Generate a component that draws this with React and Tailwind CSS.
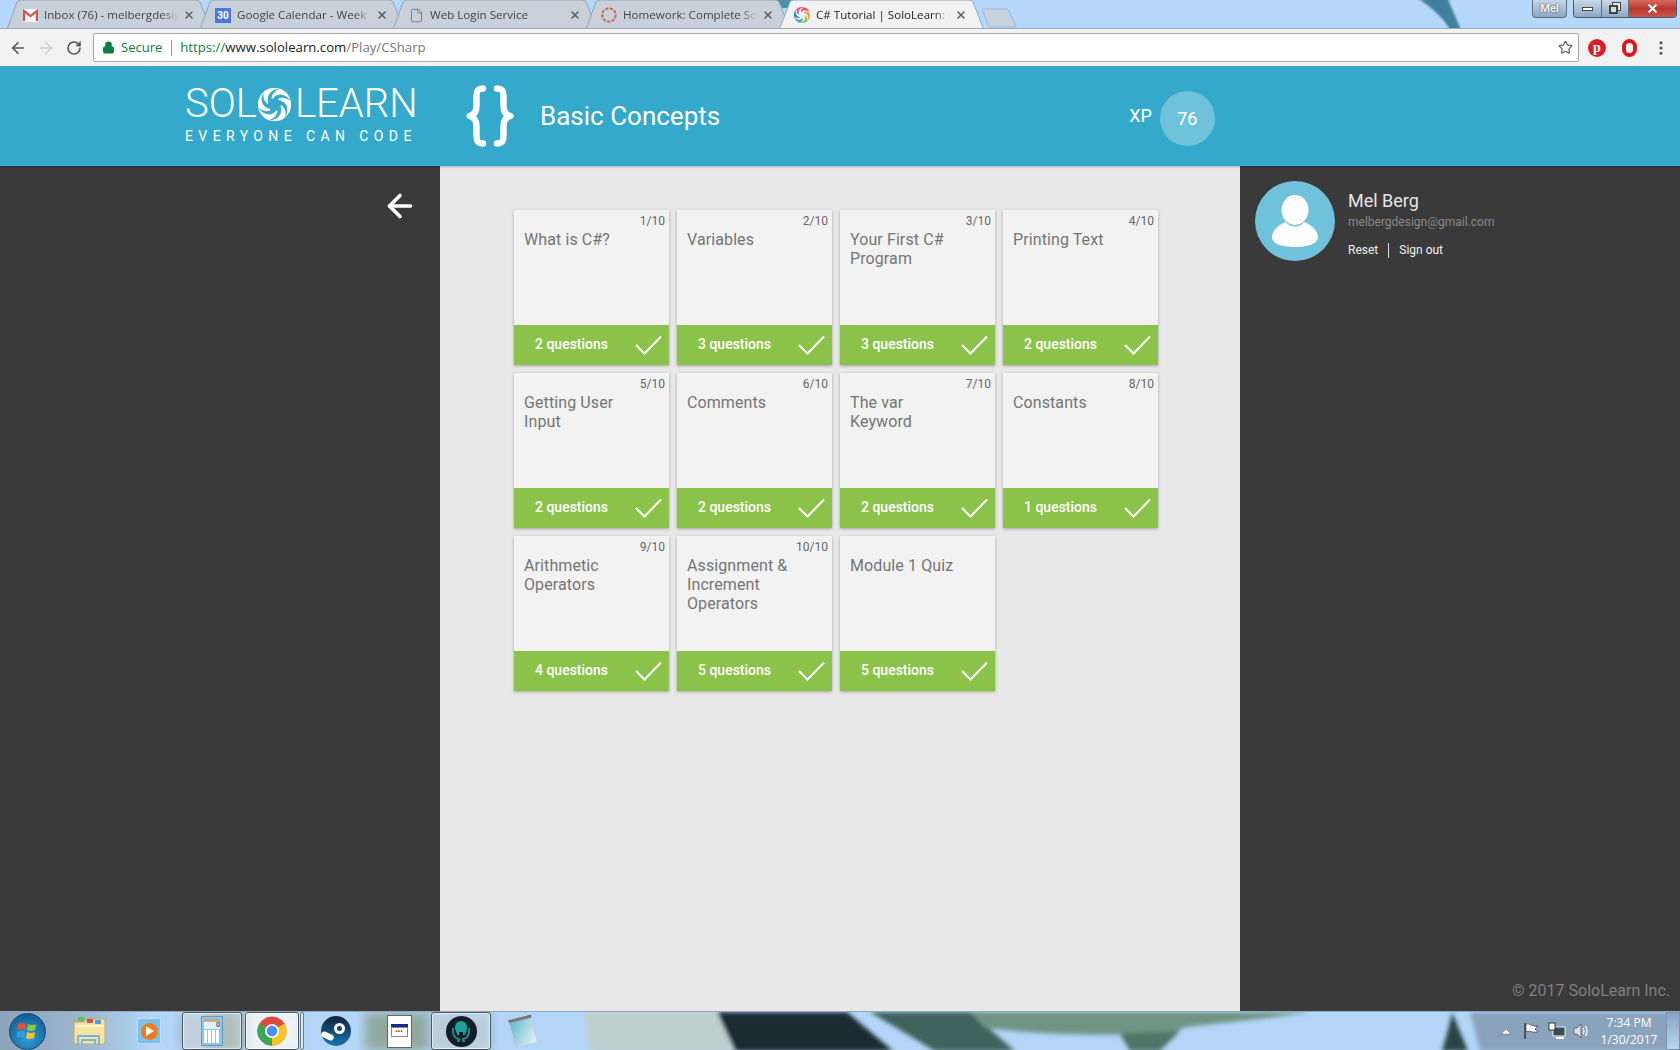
import React from "react";
import { ArrowLeft, ArrowRight, RotateCw, Star, Lock, X, File, EllipsisVertical } from "lucide-react";

const Swirl = ({ size = 32, colors = ["#fff", "#fff", "#fff", "#fff", "#fff", "#fff"], cut = "#35a9cc" }) => (
  <svg width={size} height={size} viewBox="0 0 32 32" className="shrink-0">
    {colors.map((c, i) => (
      <path key={"s" + i} d="M16 16 L16 0 A16 16 0 0 1 29.86 8 Z" fill={c} stroke={c} strokeWidth="0.3" transform={`rotate(${i * 60} 16 16)`} />
    ))}
    {colors.map((c, i) => (
      <path key={"c" + i} d="M15 9.5 C20 4.5 27 5.5 32 13 C27 9 22 8.5 18.5 11.5 Z" fill={cut} transform={`rotate(${i * 60} 16 16)`} />
    ))}
    <circle cx="16" cy="16" r="6.4" fill={cut} />
  </svg>
);

const tabs = [
  { t: "Inbox (76) - melbergdesign", icon: "m" },
  { t: "Google Calendar - Week", icon: "c" },
  { t: "Web Login Service", icon: "d" },
  { t: "Homework: Complete Solution", icon: "r" },
  { t: "C# Tutorial | SoloLearn: Learn", icon: "s", active: true },
];

const Fav = ({ k }) => {
  if (k === "m")
    return (
      <svg width="15" height="13" viewBox="0 0 15 13">
        <rect width="15" height="13" fill="#f4f4f4" />
        <path d="M1 12V2l6.5 5L14 2v10" fill="none" stroke="#d8504a" strokeWidth="2.2" />
      </svg>
    );
  if (k === "c")
    return <div className="w-[16px] h-[15px] bg-[#4a78e0] text-white text-[10px] font-bold leading-[15px] text-center">30</div>;
  if (k === "d") return <File size={15} strokeWidth={1.2} color="#666" />;
  if (k === "r")
    return (
      <svg width="16" height="16" viewBox="0 0 16 16">
        <circle cx="8" cy="8" r="6.7" fill="none" stroke="#e2504c" strokeWidth="1.8" strokeDasharray="3.2 1.4" />
      </svg>
    );
  return <Swirl size={16} cut="#f2f2f2" colors={["#e8574a", "#f0a13c", "#8bc34a", "#36aacd", "#3f7fd0", "#d85a9a"]} />;
};

const Tab = ({ t, icon, active }) => (
  <div className={`relative w-[193px] h-[30px] shrink-0 ${active ? "z-10" : ""}`}>
    <svg width="206" height="30" className="absolute left-0 top-0" viewBox="0 0 206 30">
      <path
        d={active ? "M0 30 L11 2 Q12 0 15 0 H190 Q193 0 194 2 L205 30" : "M0 29.5 L10 2 Q11 0 14 0 H189 Q192 0 193 2 L204 29.5 Z"}
        fill={active ? "#f2f2f2" : "#c8d1da"}
        stroke={active ? "#8fa7c0" : "#8fa3b7"}
      />
    </svg>
    <div className="absolute left-[15px] top-[7px] w-[16px] h-[16px] flex items-center justify-center"><Fav k={icon} /></div>
    <div className={`absolute left-[37px] top-[6px] w-[134px] overflow-hidden whitespace-nowrap text-[11.6px] leading-[18px] font-['Open_Sans',sans-serif] [mask-image:linear-gradient(90deg,#000_88%,transparent)] ${active ? "text-[#222]" : "text-[#444]"}`}>
      {t}
    </div>
    <div className="absolute left-[176px] top-[9px]"><X size={12} strokeWidth={3} color="#5c5c5c" /></div>
  </div>
);

const Brace = () => (
  <svg width="48" height="62" viewBox="0 0 48 62" fill="none" stroke="#fff" strokeWidth="6.4" strokeLinecap="round" strokeLinejoin="round">
    <path d="M17 3.5 C12 3.5 10.5 6 10.5 11 V21 C10.5 27 8 30 3.5 31 C8 32 10.5 35 10.5 41 V51 C10.5 56 12 58.5 17 58.5" />
    <path d="M31 3.5 C36 3.5 37.5 6 37.5 11 V21 C37.5 27 40 30 44.5 31 C40 32 37.5 35 37.5 41 V51 C37.5 56 36 58.5 31 58.5" />
  </svg>
);

const lessons = [
  ["What is C#?", "2 questions"],
  ["Variables", "3 questions"],
  ["Your First C# Program", "3 questions"],
  ["Printing Text", "2 questions"],
  ["Getting User Input", "2 questions"],
  ["Comments", "2 questions"],
  ["The var Keyword", "2 questions"],
  ["Constants", "1 questions"],
  ["Arithmetic Operators", "4 questions"],
  ["Assignment & Increment Operators", "5 questions"],
  ["Module 1 Quiz", "5 questions", true],
];

const Card = ({ title, q, i, noIndex }) => (
  <div className="relative w-[155px] h-[155px] flex flex-col bg-[#f2f2f2] shadow-[0_1px_3px_rgba(0,0,0,0.3)]">
    {!noIndex && <div className="absolute right-[4px] top-[3px] text-[12px] leading-[16px] text-[#666]">{i + 1}/10</div>}
    <div className="flex-1 pl-[10px] pr-[40px] pt-[20px] text-[16px] leading-[19px] tracking-[0.1px] text-[#757575]">{title}</div>
    <div className="h-[40px] bg-[#8bc34a] flex items-center justify-between pl-[21px] pr-[7px] text-white text-[14px] font-medium">
      <span className="mb-[2px]">{q}</span>
      <svg width="27" height="20" viewBox="0 0 27 20" fill="none" stroke="#fff" strokeWidth="2">
        <path d="M1 10 L9.5 18.5 L26 1.5" />
      </svg>
    </div>
  </div>
);

const TaskBtn = ({ w, children }) => (
  <div className={`${w} h-[38px] rounded-[3px] border border-[#4a5a68] flex items-center justify-center shadow-[inset_0_0_0_1px_rgba(255,255,255,0.55)]`}>
    {children}
  </div>
);

const Wallpaper = () => (
  <svg className="absolute inset-0" width="1680" height="39" viewBox="0 0 1680 39">
    <defs>
      <filter id="wb"><feGaussianBlur stdDeviation="2" /></filter>
      <filter id="wc"><feGaussianBlur stdDeviation="6" /></filter>
      <linearGradient id="wl" x1="0" x2="1" y1="0" y2="0">
        <stop offset="0" stopColor="#8ca2b8" />
        <stop offset="0.6" stopColor="#9db8d2" />
        <stop offset="1" stopColor="#b3d5f7" />
      </linearGradient>
    </defs>
    <rect width="1680" height="39" fill="#b3d5f7" />
    <rect width="150" height="39" fill="url(#wl)" />
    <rect x="180" width="70" height="39" fill="#a7bccb" filter="url(#wc)" />
    <rect x="205" width="35" height="39" fill="#8da39f" filter="url(#wc)" />
    <rect x="250" width="50" height="39" fill="#d8e4ea" filter="url(#wc)" />
    <rect x="365" width="65" height="39" fill="#8fa89e" filter="url(#wc)" />
    <rect x="432" width="60" height="39" fill="#a3bccb" filter="url(#wc)" />
    <g filter="url(#wb)">
      <path d="M585 0 H717 L735 39 H590 Z" fill="#bfcfcd" />
      <path d="M717 0 H847 L893 39 H735 Z" fill="#1b2a30" />
      <path d="M870 0 H970 L1015 39 H935 Z" fill="#3f625c" />
      <path d="M970 0 H1310 C1230 12 1170 14 1180 19 C1100 26 1040 22 985 16 Z" fill="#6f9484" />
      <path d="M1120 22 L1180 19 L1160 39 H1130 Z" fill="#4f7568" />
      <path d="M1452 0 L1468 39 H1442 C1446 25 1450 12 1452 0 Z" fill="#2b4545" />
      <path d="M1470 0 H1680 V39 H1480 Z" fill="#8aa3bd" />
    </g>
  </svg>
);

export default function App() {
  return (
    <div className="relative w-[1680px] h-[1050px] flex flex-col overflow-hidden font-['Roboto',sans-serif] bg-[#3a3a3a]">
      {/* tab strip */}
      <div className="relative h-[28px] shrink-0 bg-[#b6d8fa] pl-[7px] flex overflow-visible">
        <svg className="absolute left-[1390px] top-0" width="80" height="28" viewBox="0 0 80 28">
          <defs><filter id="b1"><feGaussianBlur stdDeviation="1" /></filter></defs>
          <path d="M26 -3 L57 -3 L71 30 L60 30 C54 18 42 8 26 -3 Z" fill="#3f7f9d" filter="url(#b1)" />
        </svg>
        <div className="absolute left-[765px] top-0 w-[30px] h-[8px] bg-[#4b93aa]" />
        {tabs.map((t) => (
          <Tab key={t.t} {...t} />
        ))}
        <svg width="36" height="20" viewBox="0 0 36 20" className="mt-[8px] ml-[9px] relative">
          <path d="M1 1 H26 Q27 1 28 3 L35 18 Q35 19 33 19 H9 Q8 19 7 17 Z" fill="#c6d2de" stroke="#9db8d4" />
        </svg>
        <div className="absolute right-[113px] top-0 w-[35px] h-[18px] rounded-b-[4px] border border-t-0 border-[#5f6f80] bg-gradient-to-b from-[#c6d6e6] to-[#8ea8c2] text-[#f4f4f4] text-[11px] font-bold leading-[17px] text-center [text-shadow:0_0_2px_#333]">Mel</div>
        <div className="absolute right-[3px] top-0 h-[18px] flex rounded-b-[4px] border border-t-0 border-[#49586a] overflow-hidden">
          <div className="w-[28px] bg-gradient-to-b from-[#c8d8e8] to-[#8ea8c2] border-r border-[#5f6f80] flex items-center justify-center"><div className="w-[11px] h-[4px] border border-[#444] bg-white" /></div>
          <div className="relative w-[27px] bg-gradient-to-b from-[#c8d8e8] to-[#8ea8c2] border-r border-[#5f6f80]">
            <div className="absolute left-[10px] top-[2px] w-[9px] h-[9px] border border-[#444] bg-[#dfe7ef]" />
            <div className="absolute left-[7px] top-[5px] w-[9px] h-[9px] border-2 border-[#444] bg-[#cfdbe7]" />
          </div>
          <div className="w-[47px] bg-gradient-to-b from-[#d96a5e] via-[#b8372e] to-[#c8564a] flex items-center justify-center"><X size={13} strokeWidth={4} color="#fff" /></div>
        </div>
      </div>

      {/* toolbar */}
      <div className="relative z-20 h-[38px] shrink-0 bg-[#f2f2f2] border-t border-[#9aa9b8] flex items-center pl-[4px]">
        <div className="w-[28px] flex items-center justify-center"><ArrowLeft size={18} strokeWidth={2.2} color="#555" /></div>
        <div className="w-[28px] flex items-center justify-center"><ArrowRight size={18} strokeWidth={2.2} color="#cfcfcf" /></div>
        <div className="w-[28px] flex items-center justify-center"><RotateCw size={16} strokeWidth={2.4} color="#555" /></div>
        <div className="ml-[5px] w-[1486px] h-[29px] bg-white border border-[#a9a9a9] rounded-[2px] flex items-center pl-[8px] pr-[5px] text-[14px]">
          <Lock size={13} fill="#0b8043" color="#0b8043" strokeWidth={2} />
          <span className="ml-[6px] text-[#0b8043] font-['Open_Sans',sans-serif] text-[13px]">Secure</span>
          <span className="ml-[9px] w-px h-[16px] bg-[#999]" />
          <span className="ml-[8px] text-[#0b8043] font-['Open_Sans',sans-serif] text-[13.2px]">https://</span>
          <span className="text-[#222] font-['Open_Sans',sans-serif] text-[13.2px]">www.sololearn.com</span>
          <span className="text-[#777] font-['Open_Sans',sans-serif] text-[13.2px]">/Play/CSharp</span>
          <Star size={15} strokeWidth={1.8} color="#555" className="ml-auto" />
        </div>
        <div className="ml-[9px] w-[18px] h-[18px] rounded-full bg-[#d81e2a] text-white text-[14px] font-bold leading-[18px] text-center font-['Liberation_Serif',serif]">p</div>
        <div className="ml-[16px] w-[15px] h-[18px] rounded-full border-[4px] border-[#e0161e] bg-white" />
        <div className="ml-[15px]"><EllipsisVertical size={18} strokeWidth={2.2} color="#555" /></div>
      </div>

      {/* site header */}
      <div className="relative z-10 h-[100px] shrink-0 bg-[#35a9cc] shadow-[0_1px_2px_rgba(0,0,0,0.25)] flex items-start text-white">
        <div className="ml-[185px] mt-[19px] w-[232px] flex flex-col">
          <div className="flex items-center h-[38px] text-[40px] font-light leading-[38px]">
            <span>SOL</span>
            <span className="ml-[1px]"><Swirl size={33} /></span>
            <span className="ml-[4px]">LEARN</span>
          </div>
          <div className="mt-[3px] text-[14px] leading-[20px] tracking-[5.4px] whitespace-nowrap">EVERYONE CAN CODE</div>
        </div>
        <div className="ml-[49px] mt-[19px]"><Brace /></div>
        <div className="ml-[26px] mt-[34px] text-[26px] leading-[32px]">Basic Concepts</div>
        <div className="ml-[409px] mt-[39px] text-[18px] leading-[21px]">XP</div>
        <div className="ml-[8px] mt-[25px] w-[55px] h-[55px] rounded-full bg-[#70c1da] flex items-center justify-center text-[18px]">76</div>
      </div>

      {/* body */}
      <div className="flex-1 flex min-h-0">
        <div className="w-[440px] shrink-0 bg-[#3a3a3a] flex justify-end pt-[22px] pr-[22px]">
          <ArrowLeft size={36} strokeWidth={2.4} color="#fff" />
        </div>
        <div className="w-[800px] shrink-0 bg-[#e8e8e8] pt-[44px] pl-[74px]">
          <div className="grid grid-cols-[repeat(4,155px)] gap-x-[8px] gap-y-[8px]">
            {lessons.map(([title, q, noIndex], i) => (
              <Card key={title} title={title} q={q} i={i} noIndex={noIndex} />
            ))}
          </div>
        </div>
        <div className="relative flex-1 bg-[#3a3a3a] pl-[15px] pt-[15px] flex items-start">
          <div className="w-[80px] h-[80px] rounded-full bg-[#70c1da] overflow-hidden shrink-0">
            <svg width="80" height="80" viewBox="0 0 80 80" fill="#fff">
              <ellipse cx="40" cy="29" rx="13.5" ry="15" />
              <path d="M31 41 C35 47 45 47 49 41 C58 44 63 51 63 56 C63 63 52 66 40 66 C28 66 17 63 17 56 C17 51 22 44 31 41 Z" />
            </svg>
          </div>
          <div className="ml-[13px] flex flex-col">
            <div className="mt-[9px] text-[18px] leading-[21px] text-[#e6e6e6]">Mel Berg</div>
            <div className="mt-[3px] text-[12px] leading-[16px] text-[#888]">melbergdesign@gmail.com</div>
            <div className="mt-[12px] flex items-center text-[12px] text-[#f0f0f0] h-[16px]">
              <span>Reset</span>
              <span className="ml-[10px] w-px h-[15px] bg-[#ddd]" />
              <span className="ml-[10px]">Sign out</span>
            </div>
          </div>
          <div className="absolute right-[10px] bottom-[10px] text-[16px] leading-[20px] text-[#808080]">© 2017 SoloLearn Inc.</div>
        </div>
      </div>

      {/* taskbar */}
      <div className="relative h-[39px] shrink-0 border-t border-[#8fa6bb] flex items-center">
        <Wallpaper />
        <div className="relative w-[54px] flex items-center justify-center">
          <div className="w-[37px] h-[37px] rounded-full bg-[radial-gradient(circle_at_50%_70%,#2f9fd8,#0b4f86)] border border-[#15476f] flex items-center justify-center">
            <svg width="20" height="20" viewBox="0 0 20 20">
              <path d="M1 3 Q5 1 9 3 L8 9 Q4 7 0 9 Z" fill="#e9502a" />
              <path d="M11 3 Q15 5 19 3 L18 9 Q14 11 10 9 Z" fill="#8dc63f" />
              <path d="M0 11 Q4 9 8 11 L7 17 Q3 15 -1 17 Z" fill="#2fa0e0" />
              <path d="M10 11 Q14 13 18 11 L17 17 Q13 19 9 17 Z" fill="#f7c325" />
            </svg>
          </div>
        </div>
        <div className="relative w-[70px] flex items-center justify-center">
          <svg width="33" height="30" viewBox="0 0 33 30">
            <path d="M2 6 H12 L14 3 H30 Q32 3 32 5 V26 Q32 28 30 28 H3 Q1 28 1 26 V7 Q1 6 2 6 Z" fill="#f6e3a2" stroke="#c9a860" />
            <rect x="5" y="1" width="6" height="4" fill="#5fbf4a" />
            <rect x="14" y="3" width="6" height="4" fill="#d8504a" />
            <rect x="22" y="4" width="6" height="4" fill="#4aa0e0" />
            <path d="M2 10 H31" stroke="#fff6d0" strokeWidth="2" />
            <path d="M5 29 V20 H26 V29 M9 29 V24 H22 V29" fill="none" stroke="#6fb7e8" strokeWidth="2" />
          </svg>
        </div>
        <div className="relative w-[50px] flex items-center justify-center">
          <div className="w-[24px] h-[26px] bg-[#7cc0ec] border border-[#bde0f7] flex items-center justify-center">
            <div className="w-[17px] h-[17px] rounded-full bg-[#f17a1d] flex items-center justify-center">
              <svg width="9" height="10" viewBox="0 0 9 10"><path d="M1 0 L9 5 L1 10 Z" fill="#fff" /></svg>
            </div>
          </div>
        </div>
        <div className="relative ml-[8px]">
          <TaskBtn w="w-[60px] bg-white/30">
            <div className="w-[22px] h-[30px] bg-[#8cc4ea] border border-[#5f9bc7] p-[2px] flex flex-col gap-[1px]">
              <div className="h-[2px] bg-[#f0a040]" />
              <div className="h-[7px] bg-[#dff0fb] text-[7px] leading-[7px] text-right text-[#555] font-bold">0</div>
              <div className="flex-1 bg-[repeating-linear-gradient(90deg,#fff_0_3px,#8cc4ea_3px_4px)]" />
            </div>
          </TaskBtn>
        </div>
        <div className="relative ml-[3px]">
          <TaskBtn w="w-[54px] bg-white/55">
            <svg width="30" height="30" viewBox="0 0 30 30">
              <circle cx="15" cy="15" r="14.5" fill="#dd4b3e" />
              <path d="M15 15 L27.5 7.5 A14.5 14.5 0 0 1 15 29.5 Z" fill="#f7c325" />
              <path d="M15 15 L15 29.5 A14.5 14.5 0 0 1 2.5 7.5 Z" fill="#3aa757" />
              <circle cx="15" cy="15" r="7" fill="#fff" />
              <circle cx="15" cy="15" r="5.4" fill="#4f8ef0" />
            </svg>
          </TaskBtn>
        </div>
        <div className="relative w-[4px] h-[38px] ml-[1px] rounded-[2px] border border-[#6d7d8a] bg-white/40" />
        <div className="relative w-[66px] ml-[-1px] flex items-center justify-center">
          <div className="relative w-[30px] h-[30px] rounded-full bg-[linear-gradient(180deg,#10213f,#1878a8)] flex items-center justify-center">
            <div className="w-[11px] h-[11px] rounded-full border-[3px] border-white ml-[6px] mb-[5px]" />
            <div className="absolute left-0 top-[17px] w-[13px] h-[6px] bg-white rotate-[25deg] rounded-full" />
          </div>
        </div>
        <div className="relative w-[60px] flex items-center justify-center">
          <div className="w-[25px] h-[33px] bg-white border border-[#666] pt-[8px] px-[3px]">
            <div className="h-[3px] bg-[#1a2a8a]" />
            <div className="h-[10px] border border-[#888] text-[7px] leading-[8px] text-[#c22] font-bold text-center">•••</div>
          </div>
        </div>
        <div className="relative ml-[2px]">
          <TaskBtn w="w-[60px] bg-white/25">
            <div className="w-[31px] h-[31px] rounded-full bg-[#121e2a] flex items-center justify-center">
              <svg width="24" height="24" viewBox="0 0 24 24" fill="#1ba39c">
                <path d="M12 2 C16 2 18 5 18 9 C18 12 16 14 15.5 16 L14 16 L14 13 L10 13 L10 16 L8.5 16 C8 14 6 12 6 9 C6 5 8 2 12 2 Z" />
                <path d="M4 9 V13 C4 17 7 20 10 20 L10 22 L8 22 M20 9 V13 C20 17 17 20 14 20 L14 22 L16 22" fill="none" stroke="#1ba39c" strokeWidth="1.6" />
              </svg>
            </div>
          </TaskBtn>
        </div>
        <div className="relative w-[60px] ml-[2px] flex items-center justify-center">
          <div className="w-[24px] h-[29px] rotate-[-14deg] bg-gradient-to-br from-[#5fb8d0] to-[#e6f2f6] border border-[#c0d0d8] border-t-[3px] border-t-[#777]" />
        </div>
        <div className="relative ml-auto flex items-center h-full text-white">
          <svg width="12" height="7" viewBox="0 0 12 7"><path d="M1 6 L6 1 L11 6 Z" fill="#fff" stroke="#556" strokeWidth="0.5" /></svg>
          <svg width="18" height="18" viewBox="0 0 18 18" className="ml-[11px]" fill="#fff" stroke="#334"><path d="M2 1 V17" strokeWidth="1.4" /><path d="M3 2 C7 1 8 5 15 4 L12 7 L15 10 C9 11 7 8 3 10 Z" strokeWidth="0.7" /></svg>
          <svg width="18" height="18" viewBox="0 0 18 18" className="ml-[7px]"><rect x="5" y="5" width="12" height="9" fill="#3c4a55" stroke="#eee" /><rect x="1" y="1" width="6" height="7" fill="#fff" stroke="#333" /><path d="M8 16 H16" stroke="#fff" strokeWidth="2" /></svg>
          <svg width="18" height="18" viewBox="0 0 18 18" className="ml-[6px]" fill="none" stroke="#fff"><path d="M2 6 H5 L9 2 V16 L5 12 H2 Z" fill="#dde" stroke="#445" strokeWidth="0.7" /><path d="M11 6 Q13 9 11 12 M13.5 4 Q16.5 9 13.5 14" strokeWidth="1.2" /></svg>
          <div className="ml-[4px] w-[70px] text-center text-[12px] leading-[17px] font-['Open_Sans',sans-serif]">
            <div>7:34 PM</div>
            <div>1/30/2017</div>
          </div>
          <div className="ml-[2px] w-[14px] h-full border border-[#7d92a8] bg-gradient-to-b from-[#8aa5c4] to-[#b6d5f2]" />
        </div>
      </div>
    </div>
  );
}
